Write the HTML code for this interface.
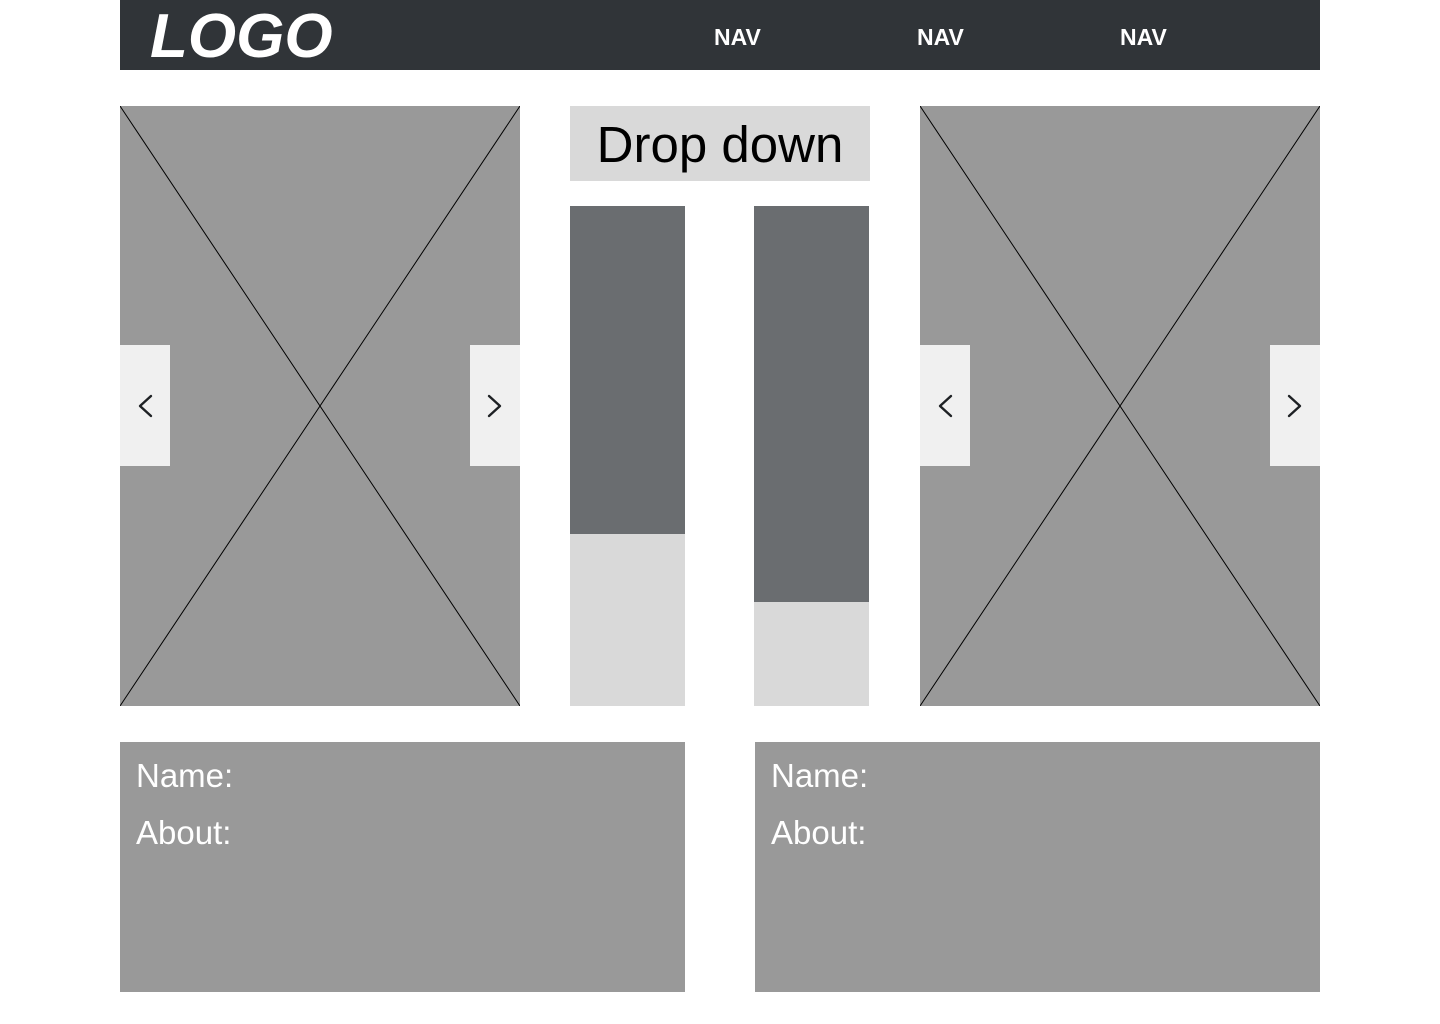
<!DOCTYPE html>
<html><head><meta charset="utf-8"><style>
*{margin:0;padding:0;box-sizing:border-box}
body{width:1440px;height:1024px;background:#fff;position:relative;font-family:"Liberation Sans",sans-serif;overflow:hidden}
.a{position:absolute}
.hdr{left:120px;top:0;width:1200px;height:70px;background:#303438}
.logo{left:150px;top:2px;color:#fff;font-size:62px;font-weight:bold;font-style:italic;line-height:70px;letter-spacing:0px}
.nav{top:22px;color:#fff;font-size:23px;font-weight:bold;line-height:30px}
.img{width:400px;height:600px;top:106px;background:#999}
.btn{width:50px;height:121px;top:239px;background:#f0f0f0}
.card{top:742px;width:565px;height:250px;background:#999;color:#fff;font-size:33px;padding:17px 16px}
.card div{line-height:34px;margin-bottom:23px}
</style></head><body>
<div class="a hdr"></div>
<div class="a logo">LOGO</div>
<div class="a nav" style="left:714px">NAV</div>
<div class="a nav" style="left:917px">NAV</div>
<div class="a nav" style="left:1120px">NAV</div>

<div class="a img" style="left:120px">
<svg width="400" height="600" style="position:absolute;left:0;top:0"><line x1="0" y1="0" x2="400" y2="600" stroke="#000" stroke-width="1"/><line x1="400" y1="0" x2="0" y2="600" stroke="#000" stroke-width="1"/></svg>
<div class="a btn" style="left:0"><svg width="50" height="121"><path d="M31 51 L20 61 L31 71" fill="none" stroke="#1e2124" stroke-width="2.4" stroke-linecap="round" stroke-linejoin="round"/></svg></div>
<div class="a btn" style="left:350px"><svg width="50" height="121"><path d="M19 51 L30 61 L19 71" fill="none" stroke="#1e2124" stroke-width="2.4" stroke-linecap="round" stroke-linejoin="round"/></svg></div>
</div>

<div class="a img" style="left:920px">
<svg width="400" height="600" style="position:absolute;left:0;top:0"><line x1="0" y1="0" x2="400" y2="600" stroke="#000" stroke-width="1"/><line x1="400" y1="0" x2="0" y2="600" stroke="#000" stroke-width="1"/></svg>
<div class="a btn" style="left:0"><svg width="50" height="121"><path d="M31 51 L20 61 L31 71" fill="none" stroke="#1e2124" stroke-width="2.4" stroke-linecap="round" stroke-linejoin="round"/></svg></div>
<div class="a btn" style="left:350px"><svg width="50" height="121"><path d="M19 51 L30 61 L19 71" fill="none" stroke="#1e2124" stroke-width="2.4" stroke-linecap="round" stroke-linejoin="round"/></svg></div>
</div>

<div class="a" style="left:570px;top:106px;width:300px;height:75px;background:#d9d9d9;font-size:51px;line-height:78px;text-align:center;color:#000">Drop down</div>

<div class="a" style="left:570px;top:206px;width:115px;height:500px;background:#d9d9d9"></div>
<div class="a" style="left:570px;top:206px;width:115px;height:328px;background:#6a6d70"></div>
<div class="a" style="left:754px;top:206px;width:115px;height:500px;background:#d9d9d9"></div>
<div class="a" style="left:754px;top:206px;width:115px;height:396px;background:#6a6d70"></div>

<div class="a card" style="left:120px"><div>Name:</div><div>About:</div></div>
<div class="a card" style="left:755px"><div>Name:</div><div>About:</div></div>
</body></html>
